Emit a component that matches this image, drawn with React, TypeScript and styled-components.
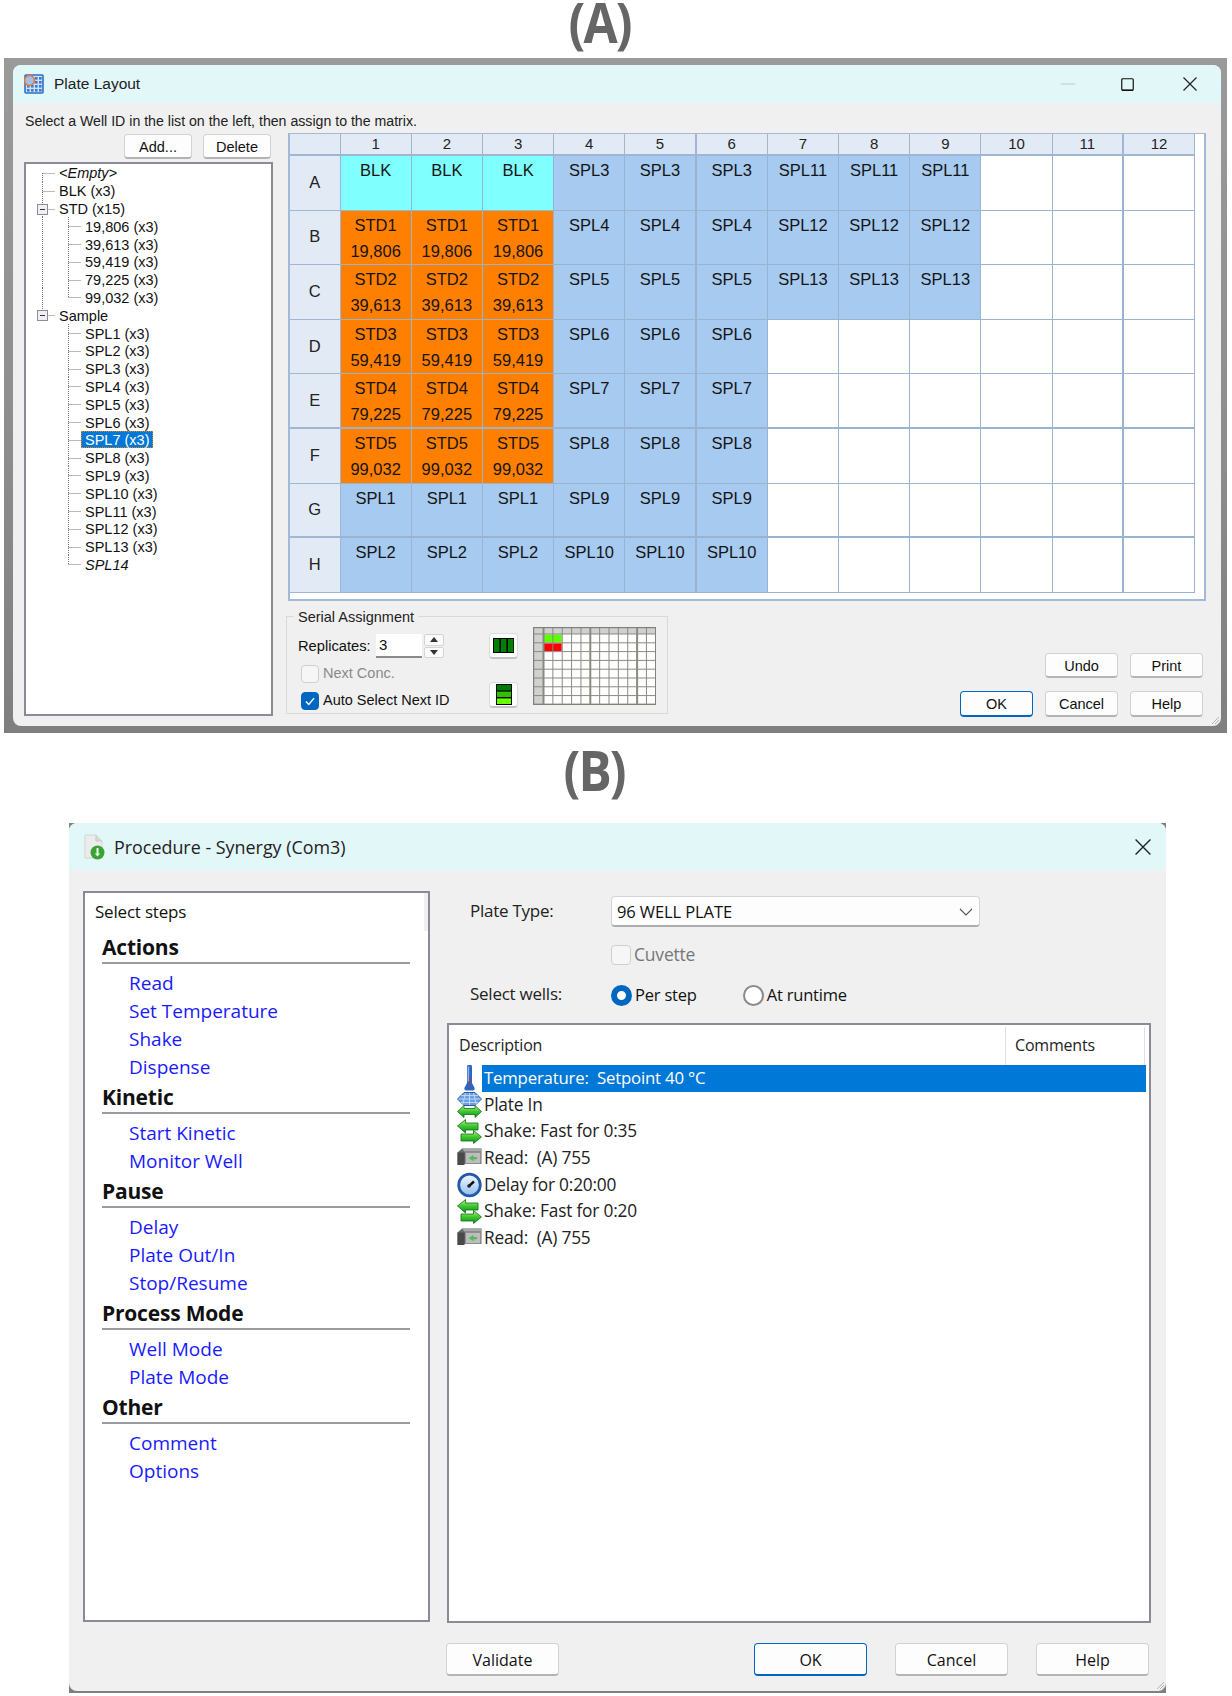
import React from "react";
import styled, { createGlobalStyle } from "styled-components";

const Global = createGlobalStyle`
  html, body { margin: 0; padding: 0; background: #fff; }
  * { box-sizing: border-box; }
`;

const SANS = `"Liberation Sans", Arial, sans-serif`;
const UI = `"Open Sans", "Noto Sans", sans-serif`;

const Page = styled.div`
  width: 1232px;
  height: 1696px;
  overflow: hidden;
  background: #fff;
`;

const Heading = styled.div<{ $h: number; $shift: number; $top: number; $lh: number }>`
  height: ${(p) => p.$h}px;
  padding-top: ${(p) => p.$top}px;
  padding-right: ${(p) => p.$shift}px;
  display: flex;
  justify-content: center;
  align-items: flex-start;
  font: 700 55px/${(p) => p.$lh}px ${UI};
  letter-spacing: -2px;
  color: #666;
  & > span { display: inline-block; transform: scaleX(0.9); }
`;

const FrameA = styled.div`
  margin-left: 4px;
  width: 1223px;
  height: 675px;
  padding: 7px 6px 7px 9px;
  background: linear-gradient(180deg, #9a9a9a 0%, #8f8f8f 50%, #7f7f7f 100%);
`;

const WindowA = styled.div`
  position: relative;
  width: 1208px;
  height: 661px;
  background: #f0f0f0;
  border-radius: 8px;
  overflow: hidden;
  font: 14.5px/1.2 ${SANS};
  color: #111;
`;

const TitleBarA = styled.div`
  height: 38px;
  background: #e2f7f7;
  display: flex;
  align-items: center;
  padding-left: 11px;
`;

const TitleTextA = styled.span`
  margin-left: 10px;
  font: 15.5px ${SANS};
  color: #222;
`;

const WinControls = styled.div`
  margin-left: auto;
  display: flex;
  align-items: center;
`;

const WinGap = styled.span<{ $w: number }>`
  width: ${(p) => p.$w}px;
`;

const Instruction = styled.div`
  height: 30px;
  padding: 10px 0 0 12px;
  font-size: 14.15px;
  line-height: 17px;
  color: #222;
`;

const MainRow = styled.div`
  display: flex;
  padding-left: 11px;
`;

const LeftCol = styled.div`
  width: 249px;
  margin-right: 15px;
  display: flex;
  flex-direction: column;
`;

const AddDeleteRow = styled.div`
  display: flex;
  justify-content: flex-end;
  gap: 11px;
  margin-top: 1px;
  margin-right: 2px;
`;

const PushButton = styled.button<{ $w: number; $h: number; $primary?: boolean; $size?: number; $font?: string }>`
  width: ${(p) => p.$w}px;
  height: ${(p) => p.$h}px;
  padding: 1px 0 0;
  background: #fdfdfd;
  border: 1px solid ${(p) => (p.$primary ? "#0067c0" : "#d2d2d2")};
  border-bottom: 2px solid ${(p) => (p.$primary ? "#0067c0" : "#b4b4b4")};
  border-radius: 4px;
  font: ${(p) => p.$size ?? 14.5}px ${(p) => p.$font ?? SANS};
  color: #111;
`;

const TreePanel = styled.div`
  margin-top: 3px;
  height: 554px;
  background: #fff;
  border: 2px solid #8b8b98;
`;

const TreeRow = styled.div`
  height: 17.8px;
  display: flex;
  align-items: center;
`;

const GuideSvg = styled.svg`
  flex: none;
  height: 18px;
  overflow: visible;
`;

const TreeLabel = styled.span<{ $sel?: boolean; $italic?: boolean }>`
  padding: 0 3px;
  height: 17px;
  line-height: 16px;
  white-space: nowrap;
  font-style: ${(p) => (p.$italic ? "italic" : "normal")};
  color: ${(p) => (p.$sel ? "#fff" : "#111")};
  background: ${(p) => (p.$sel ? "#0078d7" : "transparent")};
  border: 1px ${(p) => (p.$sel ? "dotted #e8820c" : "solid transparent")};
`;

const RightCol = styled.div`
  width: 918px;
  display: flex;
  flex-direction: column;
`;

const PlateBox = styled.div`
  height: 468px;
  background: #fff;
  border: 2px solid #a3bad6;
  border-top-width: 1px;
`;

const PlateGrid = styled.div`
  display: grid;
  grid-template-columns: 50.5px repeat(12, 71.22px);
  grid-template-rows: 22px repeat(8, 54.6px);
`;

const HeadCell = styled.div<{ $thick?: boolean; $bottomThick?: boolean }>`
  background: #e2eaf6;
  display: flex;
  align-items: center;
  justify-content: center;
  font-size: 15px;
  color: #222;
  border-right: ${(p) => (p.$thick ? 2 : 1)}px solid #a0b6d2;
  border-bottom: ${(p) => (p.$bottomThick ? 2 : 1)}px solid #a0b6d2;
`;

const RowHead = styled(HeadCell)`
  font-size: 16.5px;
`;

const WellColors = { blk: "#80ffff", std: "#ff8000", spl: "#a6caf0", none: "#fff" };

const Well = styled.div<{ $kind: keyof typeof WellColors; $thick?: boolean; $bottomThick?: boolean }>`
  background: ${(p) => WellColors[p.$kind]};
  border-right: ${(p) => (p.$thick ? 2 : 1)}px solid #9ab4d0;
  border-bottom: ${(p) => (p.$bottomThick ? 2 : 1)}px solid #9ab4d0;
  padding-top: 1px;
  text-align: center;
  font-size: 16.5px;
  line-height: 26px;
  color: #141414;
  white-space: nowrap;
`;

const BottomRow = styled.div`
  display: flex;
  margin-top: 15px;
`;

const GroupBox = styled.div`
  position: relative;
  margin-left: -2px;
  width: 382px;
  height: 98px;
  border: 1px solid #d9d9d9;
  padding: 10px 0 0 11px;
  display: flex;
`;

const GroupLegend = styled.span`
  position: absolute;
  top: -8px;
  left: 7px;
  padding: 0 4px;
  background: #f0f0f0;
  font-size: 14.5px;
  line-height: 17px;
  color: #222;
`;

const SerialControls = styled.div`
  width: 191px;
  display: flex;
  flex-direction: column;
`;

const ReplicatesRow = styled.div`
  display: flex;
  align-items: center;
  margin-top: 7px;
  height: 24px;
`;

const ReplicatesLabel = styled.span`
  width: 78px;
  padding-top: 1px;
  color: #111;
  font-size: 14.7px;
`;

const NumberBox = styled.div`
  width: 46px;
  height: 24px;
  background: #fff;
  border-bottom: 2px solid #8a8a8a;
  padding-left: 3px;
  font-size: 15px;
  line-height: 22px;
`;

const Spinner = styled.div`
  margin-left: 2px;
  width: 20px;
  height: 24px;
  display: flex;
  flex-direction: column;
  gap: 1px;
`;

const SpinPart = styled.div`
  flex: 1;
  background: #fbfbfb;
  border: 1px solid #d4d4d4;
  border-radius: 2px;
  display: flex;
  align-items: center;
  justify-content: center;
`;

const CheckRow = styled.div<{ $mt: number }>`
  display: flex;
  align-items: center;
  gap: 3px;
  height: 18px;
  margin-top: ${(p) => p.$mt}px;
  margin-left: 3px;
`;

const CheckBox = styled.span<{ $checked?: boolean; $size: number }>`
  flex: none;
  width: ${(p) => p.$size}px;
  height: ${(p) => p.$size}px;
  border-radius: 4px;
  background: ${(p) => (p.$checked ? "#0067c0" : "#f6f6f6")};
  border: 1px solid ${(p) => (p.$checked ? "#0067c0" : "#cfcfcf")};
  display: flex;
  align-items: center;
  justify-content: center;
`;

const CheckText = styled.span<{ $disabled?: boolean }>`
  margin-left: 1px;
  color: ${(p) => (p.$disabled ? "#8a8a8a" : "#111")};
  white-space: nowrap;
`;

const IconButtons = styled.div`
  display: flex;
  flex-direction: column;
  gap: 23px;
  margin-top: 6px;
  width: 29px;
`;

const IconButton = styled.div`
  width: 29px;
  height: 26px;
  background: #fdfdfd;
  border: 1px solid #dcdcdc;
  border-bottom: 2px solid #c4c4c4;
  border-radius: 4px;
  display: flex;
  align-items: center;
  justify-content: center;
`;

const MiniSvg = styled.svg`
  flex: none;
  margin-left: 15px;
`;

const ActionBlock = styled.div`
  margin-left: auto;
  margin-right: 3px;
  padding-top: 37px;
  display: flex;
  flex-direction: column;
  align-items: flex-end;
  gap: 13px;
`;

const ActionRow = styled.div`
  display: flex;
  gap: 12px;
`;

const Grip = styled.svg`
  position: absolute;
  right: 1px;
  bottom: 1px;
`;

const FrameB = styled.div`
  margin-left: 69px;
  width: 1097px;
  height: 870px;
  background: #808080;
`;

const WindowB = styled.div`
  position: relative;
  height: 868px;
  background: #f0f0f0;
  border-radius: 8px;
  overflow: hidden;
  font: 16px/1.2 ${UI};
  color: #111;
`;

const TitleBarB = styled.div`
  height: 47px;
  background: #e2f7f7;
  display: flex;
  align-items: center;
  padding-left: 15px;
`;

const TitleTextB = styled.span`
  margin-left: 9px;
  font: 17.9px ${UI};
  color: #222;
`;

const BodyB = styled.div`
  display: flex;
  padding: 21px 0 0 14px;
`;

const StepsPanel = styled.div`
  position: relative;
  width: 347px;
  height: 731px;
  background: #fff;
  border: 2px solid #8b8b98;
  padding: 8px 0 0 10px;
`;

const ScrollHint = styled.div`
  position: absolute;
  top: 0;
  right: 0;
  width: 4px;
  height: 38px;
  background: #f0f0f0;
`;

const StepsTitle = styled.div`
  font-size: 17px;
  line-height: 22px;
  letter-spacing: -0.2px;
  color: #111;
`;

const StepGroup = styled.section`
  margin-left: 7px;
  width: 308px;
`;

const StepGroupTitle = styled.div<{ $first?: boolean }>`
  margin-top: ${(p) => (p.$first ? 13 : 5)}px;
  height: 25px;
  font-size: 21px;
  font-weight: 700;
  line-height: 23px;
  letter-spacing: -0.2px;
  color: #111;
  border-bottom: 2px solid #9a9aa2;
  box-sizing: content-box;
  padding-bottom: 1px;
`;

const StepList = styled.div`
  padding: 5px 0 0 27px;
`;

const StepLink = styled.a`
  display: block;
  height: 28px;
  font-size: 19px;
  line-height: 28px;
  color: #1a1aff;
`;

const RightB = styled.div`
  margin-left: 17px;
  width: 704px;
  display: flex;
  flex-direction: column;
`;

const FormRow = styled.div<{ $mt: number; $h: number }>`
  display: flex;
  align-items: center;
  margin-top: ${(p) => p.$mt}px;
  height: ${(p) => p.$h}px;
  padding-left: 23px;
`;

const FormLabel = styled.span`
  width: 141px;
  font-size: 17px;
  letter-spacing: -0.25px;
  color: #222;
`;

const SelectBox = styled.div`
  width: 369px;
  height: 31px;
  background: #fdfdfd;
  border: 1px solid #d4d4d4;
  border-bottom: 2px solid #adadad;
  border-radius: 4px;
  padding: 1px 6px 0 5px;
  display: flex;
  align-items: center;
  justify-content: space-between;
  font-size: 16.5px;
  letter-spacing: -0.1px;
`;

const RadioLabel = styled.span<{ $muted?: boolean }>`
  display: flex;
  align-items: center;
  gap: 3px;
  padding-top: 1px;
  font-size: ${(p) => (p.$muted ? 17.5 : 16.5)}px;
  letter-spacing: -0.2px;
  color: ${(p) => (p.$muted ? "#777" : "#111")};
`;

const RadioSpacer = styled.span`
  width: 46px;
`;

const Radio = styled.span<{ $on?: boolean }>`
  flex: none;
  width: 21px;
  height: 21px;
  border-radius: 50%;
  background: #fff;
  border: ${(p) => (p.$on ? "6px solid #0067c0" : "2px solid #8a8a8a")};
`;

const ListPanel = styled.div`
  margin-top: 18px;
  height: 600px;
  background: #fff;
  border: 2px solid #8b8b98;
`;

const ListHead = styled.div`
  display: flex;
  height: 40px;
  padding-top: 2px;
`;

const ListHeadCell = styled.div<{ $w: number; $pad: number }>`
  width: ${(p) => p.$w}px;
  padding-left: ${(p) => p.$pad}px;
  display: flex;
  align-items: center;
  font-size: 16px;
  letter-spacing: -0.2px;
  color: #222;
  border-right: 1px solid #e0e0e0;
`;

const ListRow = styled.div`
  display: flex;
  align-items: center;
  height: 26.7px;
  padding-left: 8px;
  margin-right: 3px;
`;

const RowIcon = styled.svg`
  flex: none;
  width: 25px;
  height: 26px;
`;

const RowText = styled.span<{ $sel?: boolean }>`
  flex: ${(p) => (p.$sel ? 1 : "none")};
  height: 26.7px;
  padding-left: 2px;
  line-height: 26px;
  font-size: ${(p) => (p.$sel ? 16.8 : 17.3)}px;
  letter-spacing: -0.2px;
  white-space: pre;
  background: ${(p) => (p.$sel ? "#0078d7" : "transparent")};
  color: ${(p) => (p.$sel ? "#fff" : "#222")};
`;

const FooterB = styled.div`
  display: flex;
  padding: 20px 0 0 377px;
`;

const FooterRight = styled.div`
  display: flex;
  gap: 28px;
  margin-left: 195px;
`;

const PlateIcon = () => (
  <svg width="20" height="20" viewBox="0 0 20 20">
    <rect x="1" y="1" width="18" height="18" rx="1" fill="#cfe0f7" stroke="#2f6fc4" strokeWidth="1.6" />
    {[8, 12, 16].map((x) =>
      [4, 8, 12, 16].map((y) => <rect key={`${x}-${y}`} x={x - 1} y={y - 1} width="2.6" height="2.6" fill="#3a7bd5" />)
    )}
    {[4].map((x) => [12, 16].map((y) => <rect key={`${x}-${y}`} x={x - 1} y={y - 1} width="2.6" height="2.6" fill="#3a7bd5" />))}
    <circle cx="5.5" cy="6.5" r="5" fill="#9fc0ec" stroke="#e8762c" strokeWidth="1.6" />
  </svg>
);

const DocIcon = () => (
  <svg width="21" height="26" viewBox="0 0 21 26">
    <path d="M1 1h11l6 6v17H1z" fill="#ececec" stroke="#d4d4d4" />
    <path d="M12 1v6h6" fill="#d8d8d8" stroke="#c8c8c8" />
    <circle cx="13.5" cy="18.5" r="7" fill="#3aa335" />
    <path d="M13.5 14v6" stroke="#e8ffe8" strokeWidth="2" fill="none" />
    <path d="M10.8 19.5h5.4l-2.7 3z" fill="#e8ffe8" />
  </svg>
);

const WinMin = () => (
  <svg width="14" height="2" viewBox="0 0 14 2"><path d="M0 1h14" stroke="#c4c8c8" strokeWidth="1" /></svg>
);
const WinMax = () => (
  <svg width="13" height="13" viewBox="0 0 13 13">
    <rect x="0.75" y="0.75" width="11.5" height="11.5" rx="1" fill="none" stroke="#111" strokeWidth="1.2" />
    <path d="M1 12.2h11" stroke="#111" strokeWidth="1.6" />
  </svg>
);
const WinClose = ({ s }: { s: number }) => (
  <svg width={s} height={s} viewBox="0 0 14 14">
    <path d="M0.5 0.5l13 13M13.5 0.5l-13 13" stroke="#222" strokeWidth="1.2" />
  </svg>
);

const Chevron = () => (
  <svg width="14" height="8" viewBox="0 0 14 8">
    <path d="M1 1l6 6 6-6" fill="none" stroke="#555" strokeWidth="1.1" />
  </svg>
);

const Tick = ({ s }: { s: number }) => (
  <svg width={s} height={s} viewBox="0 0 12 12">
    <path d="M2.5 6.5l2.5 2.5 4.5-5.5" fill="none" stroke="#fff" strokeWidth="1.2" />
  </svg>
);

const Arrow = ({ up }: { up?: boolean }) => (
  <svg width="8" height="5" viewBox="0 0 8 5">
    <path d={up ? "M4 0l4 5H0z" : "M0 0h8L4 5z"} fill="#333" />
  </svg>
);

const ColsIcon = () => (
  <svg width="21" height="15" viewBox="0 0 21 15">
    <rect width="21" height="15" fill="#000" />
    {[1, 8, 15].map((x) => <rect key={x} x={x} y="1" width="5.4" height="13" fill="#008000" />)}
  </svg>
);

const RowsIcon = () => (
  <svg width="16" height="21" viewBox="0 0 16 21">
    <rect width="16" height="21" fill="#000" />
    <rect x="1" y="1" width="14" height="5.4" fill="#007a00" />
    <rect x="1" y="7.6" width="14" height="5.4" fill="#33c000" />
    <rect x="1" y="14.4" width="14" height="5.6" fill="#66ff00" />
  </svg>
);

const MiniGrid = () => {
  const left = 10;
  const top = 6.5;
  const cw = 9.36;
  const ch = 8.8;
  const w = left + 12 * cw;
  const h = top + 8 * ch;
  return (
    <MiniSvg width={w + 1} height={h + 1} viewBox={`0 0 ${w + 1} ${h + 1}`}>
      <rect x="0.5" y="0.5" width={w} height={h} fill="#fff" />
      <rect x="0.5" y="0.5" width={w} height={top} fill="#d0d0d0" />
      <rect x="0.5" y="0.5" width={left} height={h} fill="#d0d0d0" />
      <rect x={left + 1} y={top + 1} width={cw * 2 - 1} height={ch - 1} fill="#5cff00" />
      <rect x={left + 1} y={top + ch + 1} width={cw * 2 - 1} height={ch - 1} fill="#ff0000" />
      {Array.from({ length: 13 }, (_, i) => (
        <line key={`c${i}`} x1={left + i * cw + 0.5} x2={left + i * cw + 0.5} y1={0} y2={h} stroke="#8a8a80" strokeWidth={i === 0 || i === 5 || i === 10 ? 2 : 1} />
      ))}
      {Array.from({ length: 9 }, (_, i) => (
        <line key={`r${i}`} x1={0} x2={w} y1={top + i * ch + 0.5} y2={top + i * ch + 0.5} stroke="#8a8a80" strokeWidth={1} />
      ))}
      <rect x="0.5" y="0.5" width={w} height={h} fill="none" stroke="#808078" strokeWidth="1.4" />
    </MiniSvg>
  );
};

const GripIcon = () => (
  <Grip width="10" height="10" viewBox="0 0 10 10">
    <path d="M9 2L2 9M9 5L5 9M9 8L8 9" stroke="#b4b4b4" strokeWidth="1" />
  </Grip>
);

const GreenGrad = ({ id }: { id: string }) => (
  <linearGradient id={id} x1="0" y1="0" x2="0" y2="1">
    <stop offset="0" stopColor="#b6f58c" />
    <stop offset="0.5" stopColor="#3ec52f" />
    <stop offset="1" stopColor="#0f8f17" />
  </linearGradient>
);

const Thermo = () => (
  <RowIcon viewBox="0 0 25 26">
    <path d="M10 2a2.5 2.5 0 015 0v16l2.600 5a2 2 0 01-1.800 2.400H9.200A2 2 0 017.400 23L10 18z" fill="#2a66c4" />
    <rect x="10.6" y="1.500" width="1.600" height="15" fill="#8fb6ee" />
    <rect x="12" y="11" width="1.500" height="11" fill="#7c4a6a" />
  </RowIcon>
);

const PlateInIcon = () => (
  <RowIcon viewBox="0 0 25 26">
    <defs><GreenGrad id="gPlate" /></defs>
    <path d="M0.500 7L7 0.500h11L24.500 7 18 13.500H7z" fill="#6b9fe3" stroke="#2f5c9e" />
    <path d="M4 3.500h17M1.500 7h22M4 10.500h17M8.500 1l-3 12M12.500 1v12M16.500 1l3 12" stroke="#c3dcf7" strokeWidth="0.9" />
    <path d="M0.500 19.500L7 13.500v3h11v-3l6.500 6-6.500 6v-3H7v3z" fill="url(#gPlate)" stroke="#0e6f14" strokeWidth="0.8" />
  </RowIcon>
);

const ShakeIcon = () => (
  <RowIcon viewBox="0 0 25 26">
    <defs><GreenGrad id="gShake" /></defs>
    <path d="M0.500 7l8-6.500v3.500h12.500v7H8.500v3z" fill="url(#gShake)" stroke="#0e6f14" strokeWidth="0.8" />
    <path d="M24.500 18l-8-6.500v3.500H4v7h12.500v2.500z" fill="url(#gShake)" stroke="#0e6f14" strokeWidth="0.8" />
  </RowIcon>
);

const ReadIcon = () => (
  <RowIcon viewBox="0 0 25 26">
    <path d="M0.500 7.500L5 3.500h19.500v15.500H5L0.500 20z" fill="#6d6d6d" />
    <path d="M0.500 7.500h7V20h-7z" fill="#4a4a4a" />
    <path d="M5 3.500h19.500v3H7.500z" fill="#a8a8a8" />
    <rect x="8.500" y="7.500" width="15" height="11" fill="#bdbdbd" stroke="#8a8a8a" strokeWidth="0.6" />
    <path d="M11.500 13l5-3v2h3.500v2.200h-3.500v2z" fill="#58b858" />
  </RowIcon>
);

const ClockIcon = () => (
  <RowIcon viewBox="0 0 25 26">
    <defs>
      <linearGradient id="gClock" x1="0" y1="0" x2="0" y2="1">
        <stop offset="0" stopColor="#f4f9ff" />
        <stop offset="1" stopColor="#8fbdee" />
      </linearGradient>
    </defs>
    <circle cx="12.500" cy="13" r="10.800" fill="url(#gClock)" stroke="#2458a8" strokeWidth="2.800" />
    <path d="M12 14l5-4.500" stroke="#111" strokeWidth="2.400" />
    <circle cx="12" cy="14" r="1.800" fill="#222" />
  </RowIcon>
);

type TreeItem = {
  label: string;
  level: 1 | 2;
  first?: boolean;
  last?: boolean;
  exp?: boolean;
  v1?: boolean;
  italic?: boolean;
  sel?: boolean;
};

const stdConc = ["19,806", "39,613", "59,419", "79,225", "99,032"];

const treeItems: TreeItem[] = [
  { label: "<Empty>", level: 1, first: true, italic: true },
  { label: "BLK (x3)", level: 1 },
  { label: "STD (x15)", level: 1, exp: true },
  ...stdConc.map((c, i): TreeItem => ({ label: `${c} (x3)`, level: 2, v1: true, last: i === 4 })),
  { label: "Sample", level: 1, exp: true, last: true },
  ...Array.from({ length: 13 }, (_, i): TreeItem => ({ label: `SPL${i + 1} (x3)`, level: 2, sel: i === 6 })),
  { label: "SPL14", level: 2, last: true, italic: true },
];

const dots = { stroke: "#777", strokeWidth: 1, strokeDasharray: "1 1" };

const TreeGuide = ({ it }: { it: TreeItem }) => {
  const w = it.level === 1 ? 29 : 55;
  return (
    <GuideSvg width={w} viewBox={`0 0 ${w} 18`}>
      {it.level === 1 ? (
        <>
          <line x1="16.5" x2="16.5" y1={it.first ? 9 : 0} y2={it.last ? 9 : 18} {...dots} />
          <line x1="16.5" x2="29" y1="9.5" y2="9.5" {...dots} />
          {it.exp && (
            <>
              <rect x="11.5" y="4.5" width="10" height="10" fill="#f0f0f0" stroke="#8c8c9c" />
              <line x1="14" x2="19" y1="9.5" y2="9.5" stroke="#334" />
            </>
          )}
        </>
      ) : (
        <>
          {it.v1 && <line x1="16.5" x2="16.5" y1="0" y2="18" {...dots} />}
          <line x1="42.5" x2="42.5" y1="0" y2={it.last ? 9 : 18} {...dots} />
          <line x1="42.5" x2="55" y1="9.5" y2="9.5" {...dots} />
        </>
      )}
    </GuideSvg>
  );
};

type WellData = { kind: keyof typeof WellColors; a?: string; b?: string };

const plateRows: { id: string; std?: string[]; cols13?: string; c46?: string; c79?: string; blk?: boolean }[] = [
  { id: "A", blk: true, c46: "SPL3", c79: "SPL11" },
  { id: "B", std: ["STD1", "19,806"], c46: "SPL4", c79: "SPL12" },
  { id: "C", std: ["STD2", "39,613"], c46: "SPL5", c79: "SPL13" },
  { id: "D", std: ["STD3", "59,419"], c46: "SPL6" },
  { id: "E", std: ["STD4", "79,225"], c46: "SPL7" },
  { id: "F", std: ["STD5", "99,032"], c46: "SPL8" },
  { id: "G", cols13: "SPL1", c46: "SPL9" },
  { id: "H", cols13: "SPL2", c46: "SPL10" },
];

const wellFor = (r: (typeof plateRows)[number], col: number): WellData => {
  if (col <= 3) {
    if (r.blk) return { kind: "blk", a: "BLK" };
    if (r.std) return { kind: "std", a: r.std[0], b: r.std[1] };
    return { kind: "spl", a: r.cols13 };
  }
  if (col <= 6) return { kind: "spl", a: r.c46 };
  if (col <= 9 && r.c79) return { kind: "spl", a: r.c79 };
  return { kind: "none" };
};

const thickCol = (c: number) => c === 5 || c === 11;
const thickRow = (id: string) => id === "E" || id === "G";

const steps: { title: string; links: string[] }[] = [
  { title: "Actions", links: ["Read", "Set Temperature", "Shake", "Dispense"] },
  { title: "Kinetic", links: ["Start Kinetic", "Monitor Well"] },
  { title: "Pause", links: ["Delay", "Plate Out/In", "Stop/Resume"] },
  { title: "Process Mode", links: ["Well Mode", "Plate Mode"] },
  { title: "Other", links: ["Comment", "Options"] },
];

const procedure: { icon: React.ReactNode; text: string; sel?: boolean }[] = [
  { icon: <Thermo />, text: "Temperature:  Setpoint 40 °C", sel: true },
  { icon: <PlateInIcon />, text: "Plate In" },
  { icon: <ShakeIcon />, text: "Shake: Fast for 0:35" },
  { icon: <ReadIcon />, text: "Read:  (A) 755" },
  { icon: <ClockIcon />, text: "Delay for 0:20:00" },
  { icon: <ShakeIcon />, text: "Shake: Fast for 0:20" },
  { icon: <ReadIcon />, text: "Read:  (A) 755" },
];

export default function App() {
  return (
    <Page>
      <Global />
      <Heading $h={58} $shift={32} $top={0} $lh={44}><span>(A)</span></Heading>
      <FrameA>
        <WindowA>
          <TitleBarA>
            <PlateIcon />
            <TitleTextA>Plate Layout</TitleTextA>
            <WinControls>
              <WinMin />
              <WinGap $w={46} />
              <WinMax />
              <WinGap $w={49} />
              <WinClose s={14} />
              <WinGap $w={24} />
            </WinControls>
          </TitleBarA>
          <Instruction>Select a Well ID in the list on the left, then assign to the matrix.</Instruction>
          <MainRow>
            <LeftCol>
              <AddDeleteRow>
                <PushButton $w={68} $h={25}>Add...</PushButton>
                <PushButton $w={68} $h={25}>Delete</PushButton>
              </AddDeleteRow>
              <TreePanel>
                {treeItems.map((it) => (
                  <TreeRow key={it.label}>
                    <TreeGuide it={it} />
                    <TreeLabel $sel={it.sel} $italic={it.italic}>{it.label}</TreeLabel>
                  </TreeRow>
                ))}
              </TreePanel>
            </LeftCol>
            <RightCol>
              <PlateBox>
                <PlateGrid>
                  <HeadCell $bottomThick />
                  {Array.from({ length: 12 }, (_, i) => (
                    <HeadCell key={i} $bottomThick $thick={thickCol(i + 1)}>{i + 1}</HeadCell>
                  ))}
                  {plateRows.map((r) => (
                    <React.Fragment key={r.id}>
                      <RowHead $bottomThick={thickRow(r.id)}>{r.id}</RowHead>
                      {Array.from({ length: 12 }, (_, i) => {
                        const w = wellFor(r, i + 1);
                        return (
                          <Well key={i} $kind={w.kind} $thick={thickCol(i + 1)} $bottomThick={thickRow(r.id)}>
                            {w.a}
                            {w.b && <br />}
                            {w.b}
                          </Well>
                        );
                      })}
                    </React.Fragment>
                  ))}
                </PlateGrid>
              </PlateBox>
              <BottomRow>
                <GroupBox>
                  <GroupLegend>Serial Assignment</GroupLegend>
                  <SerialControls>
                    <ReplicatesRow>
                      <ReplicatesLabel>Replicates:</ReplicatesLabel>
                      <NumberBox>3</NumberBox>
                      <Spinner>
                        <SpinPart><Arrow up /></SpinPart>
                        <SpinPart><Arrow /></SpinPart>
                      </Spinner>
                    </ReplicatesRow>
                    <CheckRow $mt={7}>
                      <CheckBox $size={18} />
                      <CheckText $disabled>Next Conc.</CheckText>
                    </CheckRow>
                    <CheckRow $mt={9}>
                      <CheckBox $size={18} $checked><Tick s={14} /></CheckBox>
                      <CheckText>Auto Select Next ID</CheckText>
                    </CheckRow>
                  </SerialControls>
                  <IconButtons>
                    <IconButton><ColsIcon /></IconButton>
                    <IconButton><RowsIcon /></IconButton>
                  </IconButtons>
                  <MiniGrid />
                </GroupBox>
                <ActionBlock>
                  <ActionRow>
                    <PushButton $w={73} $h={25}>Undo</PushButton>
                    <PushButton $w={73} $h={25}>Print</PushButton>
                  </ActionRow>
                  <ActionRow>
                    <PushButton $w={73} $h={26} $primary>OK</PushButton>
                    <PushButton $w={73} $h={26}>Cancel</PushButton>
                    <PushButton $w={73} $h={26}>Help</PushButton>
                  </ActionRow>
                </ActionBlock>
              </BottomRow>
            </RightCol>
          </MainRow>
          <GripIcon />
        </WindowA>
      </FrameA>
      <Heading $h={90} $shift={44} $top={12} $lh={50}><span>(B)</span></Heading>
      <FrameB>
        <WindowB>
          <TitleBarB>
            <DocIcon />
            <TitleTextB>Procedure - Synergy (Com3)</TitleTextB>
            <WinControls>
              <WinClose s={16} />
              <WinGap $w={15} />
            </WinControls>
          </TitleBarB>
          <BodyB>
            <StepsPanel>
              <ScrollHint />
              <StepsTitle>Select steps</StepsTitle>
              {steps.map((g, i) => (
                <StepGroup key={g.title}>
                  <StepGroupTitle $first={i === 0}>{g.title}</StepGroupTitle>
                  <StepList>
                    {g.links.map((l) => <StepLink key={l}>{l}</StepLink>)}
                  </StepList>
                </StepGroup>
              ))}
            </StepsPanel>
            <RightB>
              <FormRow $mt={5} $h={31}>
                <FormLabel>Plate Type:</FormLabel>
                <SelectBox>96 WELL PLATE<Chevron /></SelectBox>
              </FormRow>
              <FormRow $mt={17} $h={20}>
                <FormLabel />
                <RadioLabel $muted>
                  <CheckBox $size={20} />
                  Cuvette
                </RadioLabel>
              </FormRow>
              <FormRow $mt={20} $h={21}>
                <FormLabel>Select wells:</FormLabel>
                <RadioLabel><Radio $on />Per step</RadioLabel>
                <RadioSpacer />
                <RadioLabel><Radio />At runtime</RadioLabel>
              </FormRow>
              <ListPanel>
                <ListHead>
                  <ListHeadCell $w={557} $pad={10}>Description</ListHeadCell>
                  <ListHeadCell $w={139} $pad={9}>Comments</ListHeadCell>
                </ListHead>
                {procedure.map((p, i) => (
                  <ListRow key={i}>
                    {p.icon}
                    <RowText $sel={p.sel}>{p.text}</RowText>
                  </ListRow>
                ))}
              </ListPanel>
            </RightB>
          </BodyB>
          <FooterB>
            <PushButton $w={113} $h={33} $size={16} $font={UI}>Validate</PushButton>
            <FooterRight>
              <PushButton $w={113} $h={33} $size={16} $font={UI} $primary>OK</PushButton>
              <PushButton $w={113} $h={33} $size={16} $font={UI}>Cancel</PushButton>
              <PushButton $w={113} $h={33} $size={16} $font={UI}>Help</PushButton>
            </FooterRight>
          </FooterB>
          <GripIcon />
        </WindowB>
      </FrameB>
    </Page>
  );
}
